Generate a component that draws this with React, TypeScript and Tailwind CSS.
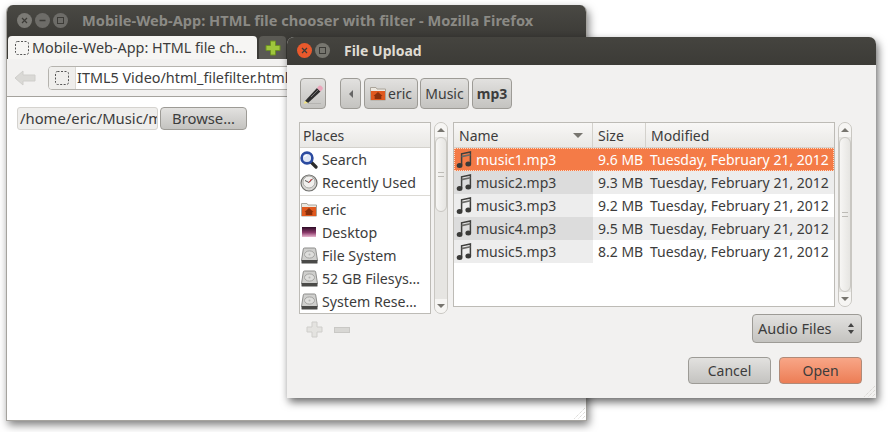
const font = { fontFamily: '"Noto Sans", "Open Sans", sans-serif' }

const Dashed = ({ size = 14 }: { size?: number }) => (
  <svg width={size} height={size} viewBox="0 0 14 14" className="shrink-0">
    <rect x="0.5" y="0.5" width="13" height="13" rx="2" fill="none" stroke="#555" strokeDasharray="2 1.5" />
  </svg>
)

const NoteIcon = () => (
  <svg width="16" height="18" viewBox="0 0 16 18" className="shrink-0">
    <path d="M5.6 14V2.8L14.4 1V12.5" fill="none" stroke="#3f3f3d" strokeWidth="1.5" />
    <path d="M5.6 5.6L14.4 3.8" stroke="#6a6a67" strokeWidth="1.6" />
    <ellipse cx="3.6" cy="14.4" rx="2.9" ry="2.5" fill="#3a3a38" />
    <ellipse cx="12.3" cy="12.9" rx="2.9" ry="2.5" fill="#3a3a38" />
  </svg>
)

const HomeFolder = () => (
  <svg width="16" height="15" viewBox="0 0 16 15" className="shrink-0">
    <path d="M0.5 14V1.5H6L7 3H15.5V14Z" fill="#ece8e0" stroke="#aaa49a" />
    <rect x="1" y="5" width="14" height="9" fill="#e0591f" />
    <path d="M8 6L12.5 10H11.3V13H4.7V10H3.5Z" fill="#8a300c" />
  </svg>
)

const Drive = () => (
  <svg width="17" height="17" viewBox="0 0 17 17" className="shrink-0">
    <path d="M3.5 1H13.5Q14.5 1 14.7 2L16.5 13.5H0.5L2.3 2Q2.5 1 3.5 1Z" fill="#cfcfcd" stroke="#8d8d8b" />
    <ellipse cx="8.5" cy="7.5" rx="5" ry="3.6" fill="#dededc" stroke="#a5a5a3" />
    <circle cx="8.5" cy="7.5" r="1" fill="#b5b5b3" />
    <rect x="0.5" y="13" width="16" height="3.5" rx="0.5" fill="#4a4a48" />
  </svg>
)

const SearchIcon = () => (
  <svg width="18" height="18" viewBox="0 0 18 18" className="shrink-0">
    <path d="M11 11L16 16" stroke="#2c2c2c" strokeWidth="3.2" strokeLinecap="round" />
    <circle cx="7" cy="7" r="5.4" fill="#dfe6f4" stroke="#2b4aa0" strokeWidth="2.6" />
    <path d="M4.5 6A3 3 0 0 1 7 4" fill="none" stroke="#fff" strokeWidth="1.2" />
  </svg>
)

const ClockIcon = () => (
  <svg width="18" height="18" viewBox="0 0 18 18" className="shrink-0">
    <circle cx="9" cy="9" r="8" fill="#d9d8d5" stroke="#6f6f6c" strokeWidth="1.2" />
    <circle cx="9" cy="8" r="6" fill="#f1f0ee" stroke="#9a9a97" strokeWidth="0.8" />
    <path d="M9 8.5L13 4.5M9 8.5L5 6.5" stroke="#555" strokeWidth="1" />
    <path d="M9 8.5L11.5 5" stroke="#c33" strokeWidth="1" />
  </svg>
)

const DesktopIcon = () => (
  <svg width="16" height="13" viewBox="0 0 16 13" className="shrink-0">
    <defs>
      <linearGradient id="desk" x1="0" y1="0" x2="0" y2="1">
        <stop offset="0" stopColor="#2c0b25" />
        <stop offset="0.55" stopColor="#8a3a6a" />
        <stop offset="1" stopColor="#e9b7cf" />
      </linearGradient>
    </defs>
    <rect width="14" height="10" x="1" y="1" fill="url(#desk)" />
  </svg>
)

const Pencil = () => (
  <svg width="22" height="22" viewBox="0 0 22 22">
    <path d="M3 18L15 5L18.5 8.5L6 20Z" fill="#2f2f2f" />
    <path d="M9 14L16.5 6.5" stroke="#777" strokeWidth="1" />
    <path d="M15 5L17 2.8Q18 2 19 2.8L20.5 4.3Q21.2 5.3 20.5 6.3L18.5 8.5Z" fill="#eba5bb" />
    <path d="M3 18L1.5 20.8L6 20Z" fill="#f1e27a" />
    <path d="M6 20.5H19" stroke="#b5b4b1" strokeWidth="1" />
  </svg>
)

const WindowDot = ({ tone, mark }: { tone: string; mark: 'x' | 'min' | 'max' }) => (
  <div className={`flex h-[15px] w-[15px] items-center justify-center rounded-full ${tone}`}>
    <svg width="7" height="7" viewBox="0 0 7 7">
      {mark === 'x' && <path d="M1 1L6 6M6 1L1 6" stroke="#3c3b37" strokeWidth="1.2" />}
      {mark === 'min' && <path d="M0.5 3.5H6.5" stroke="#3c3b37" strokeWidth="1.4" />}
      {mark === 'max' && <rect x="0.5" y="0.5" width="6" height="6" fill="none" stroke="#3c3b37" />}
    </svg>
  </div>
)

const ResizeGrip = ({ className }: { className: string }) => (
  <svg width="14" height="14" viewBox="0 0 14 14" className={`absolute ${className}`}>
    <path d="M13 2L2 13M13 6L6 13M13 10L10 13" stroke="#cfcdc8" strokeWidth="1" strokeDasharray="1 1" />
  </svg>
)

const Scrollbar = ({ thumbClass, gripClass }: { thumbClass: string; gripClass: string }) => (
  <div className="flex w-[14px] shrink-0 flex-col rounded-[7px] border border-[#c9c7c2] bg-[#e6e5e2]">
    <div className="flex h-[14px] shrink-0 items-center justify-center rounded-t-[7px] bg-[#f6f5f3]">
      <div className="h-0 w-0 border-x-[4px] border-b-[4px] border-x-transparent border-b-[#77756f]" />
    </div>
    <div className={`flex shrink-0 items-center justify-center rounded-[7px] border border-[#c9c7c2] bg-gradient-to-r from-[#f7f6f4] to-[#e6e5e2] ${thumbClass}`}>
      <div className={`w-[6px] border-y border-[#bdbbb6] ${gripClass}`} />
    </div>
    <div className="flex-1" />
    <div className="flex h-[14px] shrink-0 items-center justify-center rounded-b-[7px] bg-[#f6f5f3]">
      <div className="h-0 w-0 border-x-[4px] border-t-[4px] border-x-transparent border-t-[#77756f]" />
    </div>
  </div>
)

const btn = 'rounded-[4px] border border-[#9d9b96] bg-gradient-to-b from-[#e2e1df] to-[#c4c3c0]'

const PathButton = ({ children, className = '' }: { children: React.ReactNode; className?: string }) => (
  <div className={`flex h-[31px] items-center justify-center ${btn} ${className}`}>{children}</div>
)

const PlaceRow = ({ icon, label }: { icon: React.ReactNode; label: string }) => (
  <div className="flex h-[23px] items-center gap-[4px] text-[14.2px]">
    <div className="flex w-[18px] justify-center">{icon}</div>
    <span className="whitespace-nowrap">{label}</span>
  </div>
)

const files = [
  { name: 'music1.mp3', size: '9.6 MB' },
  { name: 'music2.mp3', size: '9.3 MB' },
  { name: 'music3.mp3', size: '9.2 MB' },
  { name: 'music4.mp3', size: '9.5 MB' },
  { name: 'music5.mp3', size: '8.2 MB' },
]

const FileRow = ({ name, size, index }: { name: string; size: string; index: number }) => {
  const selected = index === 0
  const odd = index % 2 === 1
  const nameBg = selected ? '' : odd ? 'bg-[#dcdcdc]' : 'bg-[#ededed]'
  const restBg = selected ? '' : odd ? 'bg-[#ededed]' : 'bg-white'
  return (
    <div className={`flex h-[23px] ${selected ? 'bg-[#f47b47] text-white outline outline-1 -outline-offset-1 outline-dotted outline-[#ffd9c4]' : ''}`}>
      <div className={`flex w-[139px] items-center gap-[4px] pl-[2px] ${nameBg}`}>
        <NoteIcon />
        <span>{name}</span>
      </div>
      <div className={`flex w-[54px] items-center pl-[5px] ${restBg}`}>{size}</div>
      <div className={`flex flex-1 items-center whitespace-nowrap pl-[3px] ${restBg}`}>Tuesday, February 21, 2012</div>
    </div>
  )
}

const HeaderCell = ({ className, children }: { className: string; children: React.ReactNode }) => (
  <div className={`flex items-center border-r border-[#d3d1cc] pl-[5px] ${className}`}>{children}</div>
)

const BrowserWindow = () => (
  <div className="absolute left-[6px] top-[5px] flex h-[416px] w-[581px] flex-col overflow-hidden rounded-t-[7px] border-x border-b border-[#a5a39e] bg-white shadow-[2px_4px_8px_rgba(0,0,0,0.5)]">
    <div className="flex h-[31px] shrink-0 items-center bg-gradient-to-b from-[#4a4944] to-[#3c3b37] pl-[10px]">
      <div className="flex gap-[3px]">
        <WindowDot tone="bg-[#7b7a75]" mark="x" />
        <WindowDot tone="bg-[#6d6c68]" mark="min" />
        <WindowDot tone="bg-[#6d6c68]" mark="max" />
      </div>
      <span className="ml-[14px] whitespace-nowrap text-[14.6px] font-bold text-[#8b8a85]">
        Mobile-Web-App: HTML file chooser with filter - Mozilla Firefox
      </span>
    </div>
    <div className="flex h-[23px] shrink-0 items-end bg-[#3c3b37] pl-px">
      <div className="flex h-[23px] w-[249px] items-center gap-[3px] rounded-t-[4px] bg-[#f6f5f3] pl-[7px] text-[14.4px] text-[#3c3c3c]">
        <Dashed />
        <span className="whitespace-nowrap">Mobile-Web-App: HTML file ch…</span>
      </div>
      <div className="ml-[2px] flex h-[23px] w-[27px] items-center justify-center rounded-t-[4px] bg-[#5a5954]">
        <svg width="16" height="16" viewBox="0 0 16 16">
          <path d="M5.5 1H10.5V5.5H15V10.5H10.5V15H5.5V10.5H1V5.5H5.5Z" fill="#9fc63c" stroke="#6c8f22" />
        </svg>
      </div>
    </div>
    <div className="flex h-[38px] shrink-0 items-center border-b border-[#a5a39e] bg-[#f2f1f0] pl-[7px]">
      <svg width="22" height="16" viewBox="0 0 22 16">
        <path d="M9 1L1 8L9 15V11H21V5H9Z" fill="#dad9d6" stroke="#cfcecb" />
      </svg>
      <div className="ml-[12px] flex h-[24px] flex-1 overflow-hidden rounded-[4px] border border-[#b5b3ae] bg-white text-[14.4px] text-[#3c3c3c]">
        <div className="flex w-[27px] shrink-0 items-center justify-center border-r border-[#dcdad5] bg-[#efeeec]">
          <Dashed />
        </div>
        <span className="ml-px flex items-center whitespace-nowrap">ITML5 Video/html_filefilter.html</span>
      </div>
    </div>
    <div className="relative flex flex-1 items-start gap-[2px] pl-[10px] pt-[10px] text-[14.8px] text-[#3c3c3c]">
      <div className="flex h-[23px] w-[141px] items-center overflow-hidden rounded-[3px] border border-[#d5d3cf] bg-[#efeeec] pl-[2px] whitespace-nowrap">
        /home/eric/Music/mp3
      </div>
      <div className={`flex h-[23px] w-[87px] items-center justify-center ${btn}`}>Browse…</div>
      <ResizeGrip className="bottom-0 right-0" />
    </div>
  </div>
)

const FileDialog = () => (
  <div className="absolute left-[287px] top-[37px] flex h-[361px] w-[589px] flex-col overflow-hidden rounded-t-[7px] bg-[#f2f1f0] text-[14px] text-[#3c3c3c] shadow-[2px_4px_8px_rgba(0,0,0,0.6)]">
    <div className="flex h-[28px] shrink-0 items-center bg-gradient-to-b from-[#45443f] to-[#3c3b37] pb-[2px] pl-[10px]">
      <div className="flex gap-[3px]">
        <WindowDot tone="bg-[#e9592c]" mark="x" />
        <WindowDot tone="bg-[#77766f]" mark="max" />
      </div>
      <span className="ml-[14px] text-[14px] font-bold text-[#dfdbd2]">File Upload</span>
    </div>
    <div className="relative flex flex-1 flex-col pl-[12px] pr-[14px] pt-[13px]">
      <div className="ml-px flex h-[31px] shrink-0 items-center">
        <PathButton className="w-[26px]"><Pencil /></PathButton>
        <PathButton className="ml-[14px] w-[21px]">
          <div className="h-0 w-0 border-y-[4px] border-r-[4px] border-y-transparent border-r-[#666]" />
        </PathButton>
        <PathButton className="ml-[3px] w-[54px] gap-[2px]"><HomeFolder /><span>eric</span></PathButton>
        <PathButton className="ml-[2px] w-[49px]">Music</PathButton>
        <PathButton className="ml-[3px] w-[40px] from-[#d1d0ce] to-[#bab9b6] font-bold">mp3</PathButton>
      </div>
      <div className="mt-[13px] flex h-[192px] shrink-0 items-start">
        <div className="flex h-[192px] w-[132px] shrink-0 flex-col border border-[#bdbbb6] bg-white">
          <div className="flex h-[25px] shrink-0 items-center border-b border-[#d3d1cc] bg-gradient-to-b from-[#f8f7f6] to-[#e9e8e5] pl-[3px]">Places</div>
          <PlaceRow icon={<SearchIcon />} label="Search" />
          <PlaceRow icon={<ClockIcon />} label="Recently Used" />
          <div className="mb-[2px] mt-px h-px bg-[#dcdad5]" />
          <PlaceRow icon={<HomeFolder />} label="eric" />
          <PlaceRow icon={<DesktopIcon />} label="Desktop" />
          <PlaceRow icon={<Drive />} label="File System" />
          <PlaceRow icon={<Drive />} label="52 GB Filesys…" />
          <PlaceRow icon={<Drive />} label="System Rese…" />
        </div>
        <div className="ml-[3px] flex h-[192px]">
          <Scrollbar thumbClass="h-[75px]" gripClass="h-[5px]" />
        </div>
        <div className="ml-[5px] flex h-[185px] w-[382px] shrink-0 flex-col border border-[#bdbbb6] bg-white">
          <div className="flex h-[25px] shrink-0 border-b border-[#d3d1cc] bg-gradient-to-b from-[#f8f7f6] to-[#e9e8e5]">
            <HeaderCell className="relative w-[139px]">
              Name
              <div className="absolute right-[9px] top-[10px] h-0 w-0 border-x-[5px] border-t-[5px] border-x-transparent border-t-[#77756f]" />
            </HeaderCell>
            <HeaderCell className="w-[53px]">Size</HeaderCell>
            <div className="flex items-center pl-[5px]">Modified</div>
          </div>
          {files.map((f, i) => (
            <FileRow key={f.name} name={f.name} size={f.size} index={i} />
          ))}
        </div>
        <div className="ml-[3px] flex h-[185px]">
          <Scrollbar thumbClass="h-[155px]" gripClass="h-[5px]" />
        </div>
      </div>
      <div className="relative flex shrink-0 justify-end">
        <div className="absolute left-[7px] top-[7px] flex items-center gap-[11px]">
          <svg width="17" height="17" viewBox="0 0 17 17">
            <path d="M6 1H11V6H16V11H11V16H6V11H1V6H6Z" fill="#e4e3e0" stroke="#cfcecb" />
          </svg>
          <div className="h-[6px] w-[16px] border border-[#c9c8c5] bg-[#d8d7d4]" />
        </div>
      </div>
      <div className="flex shrink-0 justify-end">
        <div className={`flex h-[29px] w-[110px] items-center justify-between pl-[5px] pr-[7px] text-[14.5px] ${btn}`}>
          <span>Audio Files</span>
          <div className="flex flex-col gap-[3px]">
            <div className="h-0 w-0 border-x-[3px] border-b-[4px] border-x-transparent border-b-[#444]" />
            <div className="h-0 w-0 border-x-[3px] border-t-[4px] border-x-transparent border-t-[#444]" />
          </div>
        </div>
      </div>
      <div className="mt-[14px] flex shrink-0 justify-end gap-[8px]">
        <div className={`flex h-[27px] w-[83px] items-center justify-center ${btn}`}>Cancel</div>
        <div className="flex h-[27px] w-[83px] items-center justify-center rounded-[4px] border border-[#b08a78] bg-gradient-to-b from-[#f8a687] to-[#ec7d55]">Open</div>
      </div>
      <ResizeGrip className="bottom-0 right-0" />
    </div>
  </div>
)

export default function App() {
  return (
    <div className="relative h-[432px] w-[889px] overflow-hidden bg-white" style={font}>
      <BrowserWindow />
      <FileDialog />
    </div>
  )
}
